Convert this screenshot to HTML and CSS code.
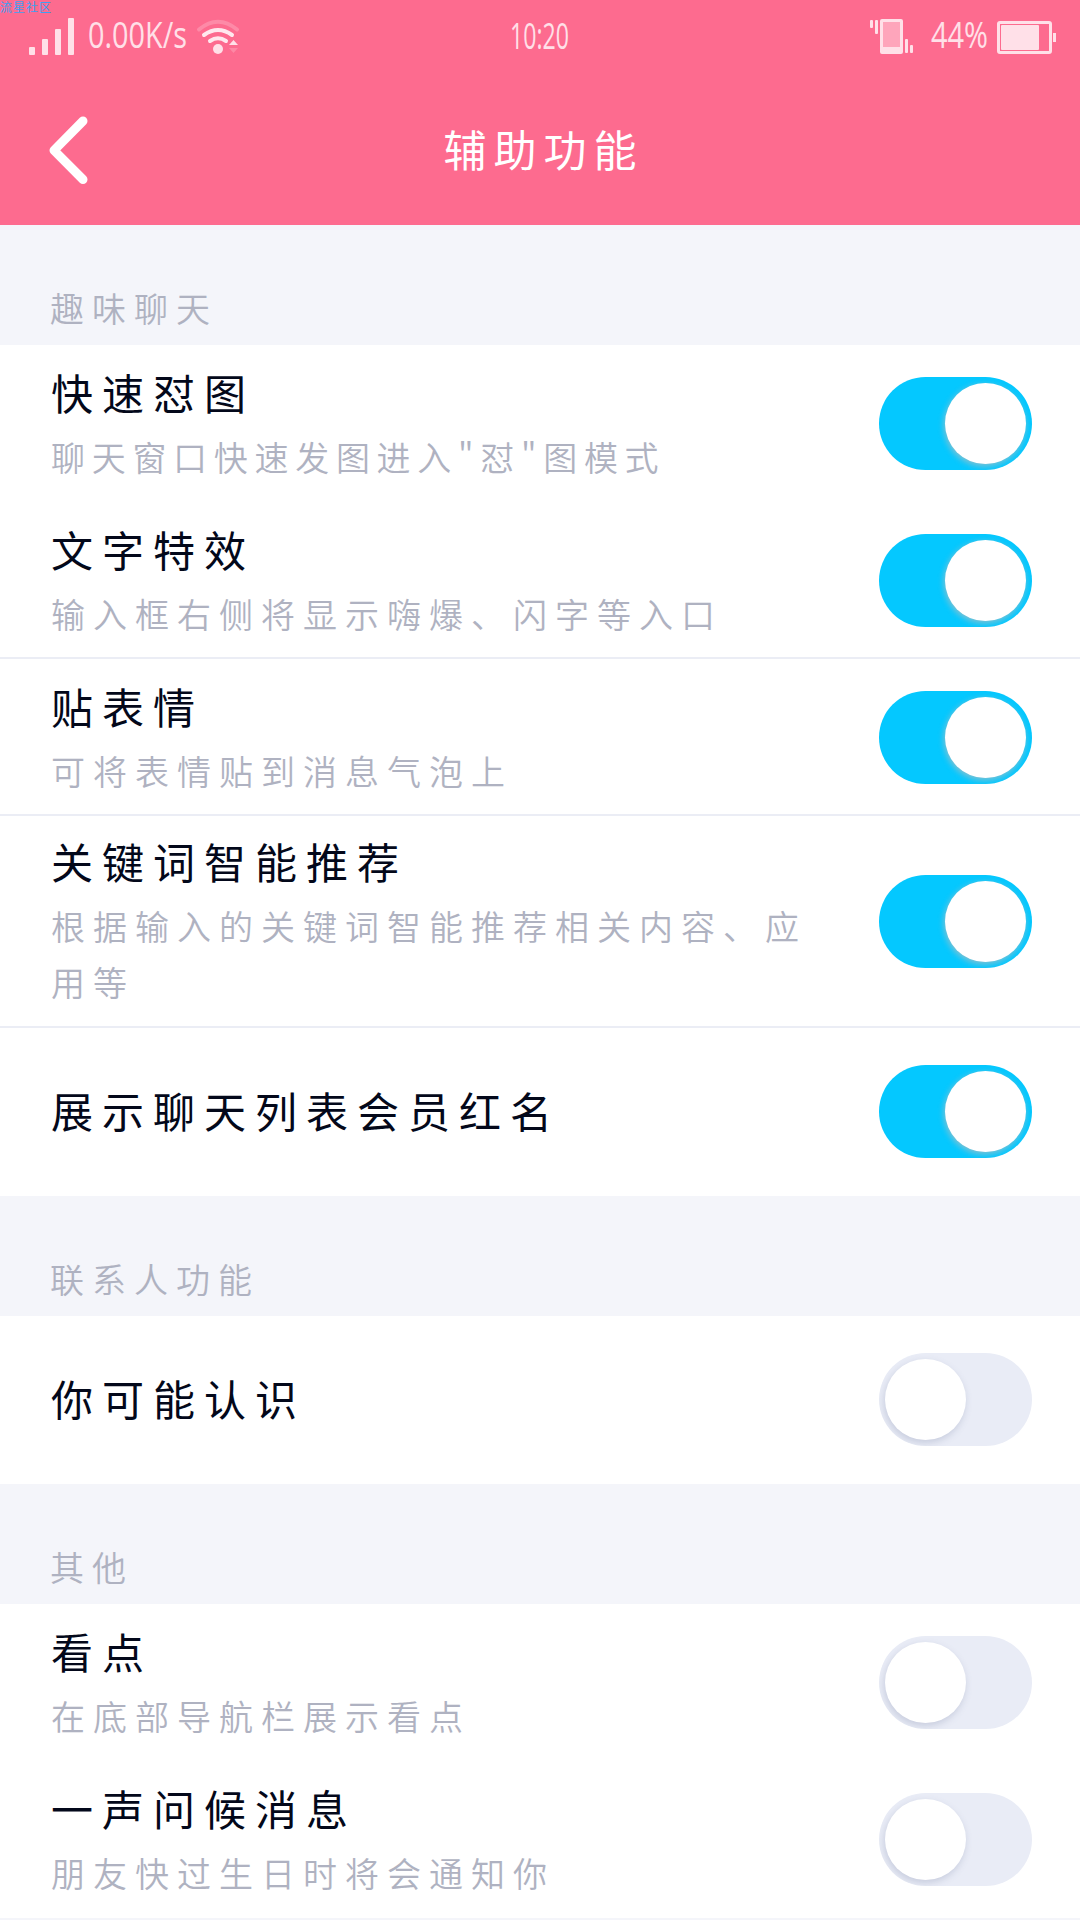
FILE: index.html
```html
<!DOCTYPE html>
<html lang="zh-CN">
<head>
<meta charset="utf-8">
<title>辅助功能</title>
<link rel="stylesheet" href="styles.css">
</head>
<body>
<header class="header">
  <span class="watermark">流星社区</span>
  <div class="status">
    <svg width="260" height="74" viewBox="0 0 260 74" class="status-icon">
      <rect x="29" y="47" width="6" height="8" rx="1"/>
      <rect x="42" y="39" width="6" height="16" rx="1"/>
      <rect x="55" y="29" width="6" height="26" rx="1"/>
      <rect x="68" y="18" width="6" height="37" rx="1"/>
      <text x="88" y="48" textLength="99" lengthAdjust="spacingAndGlyphs">0.00K/s</text>
      <g class="arc">
        <path class="faint" d="M199 29.500Q218 14 237 29.500"/>
        <path d="M204 35Q218 25 232 35"/>
        <path d="M210 41Q218 35.500 226 41"/>
      </g>
      <circle cx="218" cy="49" r="5"/>
      <path d="M229 45h9l-4.500-5z"/>
      <path class="faint" d="M229 48h9l-4.500 5z"/>
    </svg>
    <svg width="160" height="74" viewBox="460 0 160 74" class="status-icon">
      <text x="510" y="49" textLength="59" lengthAdjust="spacingAndGlyphs">10:20</text>
    </svg>
    <svg width="220" height="74" viewBox="860 0 220 74" class="status-icon">
      <rect x="870" y="20" width="3" height="8" rx="1"/>
      <rect x="875" y="20" width="3" height="14" rx="1"/>
      <path fill-rule="evenodd" d="M882 19h19q2 0 2 2v31q0 2-2 2h-19q-2 0-2-2V21q0-2 2-2zM883 22v25h17V22z"/>
      <rect class="screen" x="883" y="22" width="17" height="25"/>
      <rect x="905" y="39" width="3" height="14" rx="1"/>
      <rect x="910" y="45" width="3" height="8" rx="1"/>
      <text x="931" y="48" textLength="57" lengthAdjust="spacingAndGlyphs">44%</text>
      <rect class="battery" x="998.500" y="22.500" width="52" height="30" rx="1.500"/>
      <rect x="1001" y="25" width="38" height="25" rx="1"/>
      <rect x="1053" y="33" width="3" height="9"/>
    </svg>
  </div>
  <div class="nav">
    <svg class="back" width="50" height="76" viewBox="45 112 50 76"><path d="M83 121L54 150.300L83 179.500"/></svg>
    <h1 class="nav-title">辅助功能</h1>
  </div>
</header>
<main>
  <h2 class="section">趣味聊天</h2>
  <div class="row">
    <div class="copy"><div class="title">快速怼图</div><div class="desc desc-tight">聊天窗口快速发图进入"怼"图模式</div></div>
    <span class="toggle on"></span>
  </div>
  <div class="row line">
    <div class="copy"><div class="title">文字特效</div><div class="desc">输入框右侧将显示嗨爆、闪字等入口</div></div>
    <span class="toggle on"></span>
  </div>
  <div class="row line">
    <div class="copy"><div class="title">贴表情</div><div class="desc">可将表情贴到消息气泡上</div></div>
    <span class="toggle on"></span>
  </div>
  <div class="row tall line">
    <div class="copy"><div class="title">关键词智能推荐</div><div class="desc">根据输入的关键词智能推荐相关内容、应用等</div></div>
    <span class="toggle on"></span>
  </div>
  <div class="row single">
    <div class="copy"><div class="title">展示聊天列表会员红名</div></div>
    <span class="toggle on"></span>
  </div>
  <h2 class="section">联系人功能</h2>
  <div class="row single">
    <div class="copy"><div class="title">你可能认识</div></div>
    <span class="toggle"></span>
  </div>
  <h2 class="section">其他</h2>
  <div class="row">
    <div class="copy"><div class="title">看点</div><div class="desc">在底部导航栏展示看点</div></div>
    <span class="toggle"></span>
  </div>
  <div class="row">
    <div class="copy"><div class="title">一声问候消息</div><div class="desc">朋友快过生日时将会通知你</div></div>
    <span class="toggle"></span>
  </div>
</main>
</body>
</html>
```
FILE: styles.css
```css
* {
  box-sizing: border-box;
}

body {
  margin: 0;
  width: 1080px;
  height: 1920px;
  overflow: hidden;
  background: #f4f5fa;
  font-family: "Noto Sans CJK SC", sans-serif;
  font-weight: 400;
}

.header {
  position: relative;
  height: 225px;
  background: #fd6b8f;
  color: #fff;
}

.watermark {
  position: absolute;
  left: 0;
  top: 0;
  font-size: 12px;
  line-height: 13px;
  letter-spacing: 1px;
  color: #3d9ff2;
}

.status {
  display: grid;
  grid-template-columns: 460px 400px 220px;
  height: 74px;
}

.status-icon {
  display: block;
  fill: #ffe0e8;
}

.status-icon text {
  font-family: "Open Sans", sans-serif;
  font-size: 36px;
  font-weight: 400;
}

.status-icon .faint {
  opacity: 0.25;
}

.status-icon .screen {
  opacity: 0.5;
}

.status-icon .battery {
  fill: none;
  stroke: #ffe0e8;
  stroke-width: 3;
}

.arc {
  fill: none;
  stroke: #ffe8ee;
  stroke-width: 4;
  stroke-linecap: round;
}

.nav {
  display: grid;
  grid-template-columns: 45px 50px 1fr 95px;
  align-items: center;
  height: 151px;
}

.back {
  grid-column: 2;
  fill: none;
  stroke: #fff;
  stroke-width: 9;
  stroke-linecap: round;
  stroke-linejoin: round;
}

.nav-title {
  grid-column: 3;
  margin: 0;
  padding: 0 0 4px 7px;
  text-align: center;
  font-size: 43px;
  font-weight: 400;
  line-height: 64px;
  letter-spacing: 7px;
}

.section {
  height: 120px;
  margin: 0;
  padding: 55px 0 0 50px;
  font-size: 34px;
  font-weight: 350;
  line-height: 56px;
  letter-spacing: 8px;
  color: #afb2c1;
}

.row {
  display: flex;
  align-items: center;
  justify-content: space-between;
  height: 157px;
  padding: 0 48px 0 51px;
  background: #fff;
}

.line {
  background: linear-gradient(#ebedf5, #ebedf5) bottom / 100% 2px no-repeat #fff;
}

.tall {
  height: 212px;
  padding-bottom: 2px;
}

.single {
  height: 168px;
  padding-bottom: 2px;
}

.copy {
  width: 780px;
  padding-bottom: 3px;
}

.title {
  font-size: 42px;
  line-height: 64px;
  letter-spacing: 9px;
  color: #03081a;
}

.desc {
  margin-top: 5px;
  font-size: 34px;
  font-weight: 350;
  line-height: 56px;
  letter-spacing: 8px;
  color: #afb2c1;
}

.desc-tight {
  letter-spacing: 6.700px;
}

.toggle {
  display: flex;
  flex: none;
  width: 153px;
  height: 93px;
  padding: 6px;
  overflow: hidden;
  border-radius: 47px;
  background: #e9ecf6;
}

.toggle::before {
  content: "";
  width: 81px;
  height: 81px;
  border-radius: 50%;
  background: #fff;
  box-shadow: -1px 3px 7px rgba(100, 110, 150, 0.25);
}

.on {
  justify-content: flex-end;
  background: #04c8ff;
}

.on::before {
  box-shadow: -1px 2px 6px rgba(190, 190, 190, 0.75);
}
```
